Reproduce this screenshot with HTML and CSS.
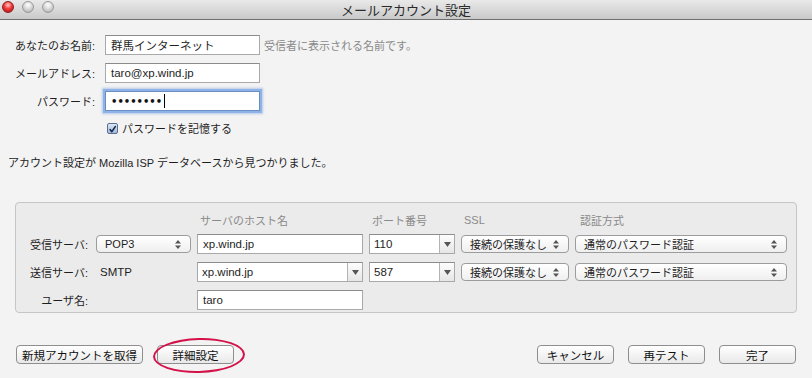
FILE: index.html
```html
<!DOCTYPE html>
<html lang="ja">
<head>
  <meta charset="UTF-8">
  <title>メールアカウント設定</title>
  <link rel="stylesheet" href="styles.css">
</head>
<body>

  <div class="window">
    <div class="titlebar">
      <div class="lights">
        <span class="light red"></span>
        <span class="light"></span>
        <span class="light"></span>
      </div>
      <div class="title">メールアカウント設定</div>
    </div>

    <div class="form">
      <label class="label">あなたのお名前:</label>
      <div class="field">群馬インターネット</div>
      <div class="hint">受信者に表示される名前です。</div>

      <label class="label">メールアドレス:</label>
      <div class="field">taro@xp.wind.jp</div>
      <div></div>

      <label class="label">パスワード:</label>
      <div class="field focus"><span class="dots">••••••••</span><span class="caret"></span></div>
      <div></div>

      <div></div>
      <div class="remember">
        <span class="check">
          <svg width="11" height="11" viewBox="0 0 11 11"><path d="M2.5 5.5 L4.6 8.2 L9 1.8" fill="none" stroke="#1c2a44" stroke-width="1.8" stroke-linecap="round" stroke-linejoin="round"/></svg>
        </span>
        パスワードを記憶する
      </div>
      <div></div>
    </div>

    <p class="message">アカウント設定が Mozilla ISP データベースから見つかりました。</p>

    <div class="panel">
      <div class="servers">
        <div></div><div></div>
        <div class="head">サーバのホスト名</div>
        <div class="head">ポート番号</div>
        <div class="head">SSL</div>
        <div class="head auth-head">認証方式</div>

        <div class="label">受信サーバ:</div>
        <div class="popup">POP3<svg class="updown" width="6" height="9" viewBox="0 0 6 9"><path d="M3 0 L6 3.4 H0 Z M3 9 L6 5.6 H0 Z" fill="#555"/></svg></div>
        <div class="field">xp.wind.jp</div>
        <div class="combo"><span class="combo-text">110</span><span class="combo-btn"><svg width="7" height="5" viewBox="0 0 7 5"><path d="M0 0 H7 L3.5 5 Z" fill="#555"/></svg></span></div>
        <div class="popup">接続の保護なし<svg class="updown" width="6" height="9" viewBox="0 0 6 9"><path d="M3 0 L6 3.4 H0 Z M3 9 L6 5.6 H0 Z" fill="#555"/></svg></div>
        <div class="popup">通常のパスワード認証<svg class="updown" width="6" height="9" viewBox="0 0 6 9"><path d="M3 0 L6 3.4 H0 Z M3 9 L6 5.6 H0 Z" fill="#555"/></svg></div>

        <div class="label">送信サーバ:</div>
        <div class="plain">SMTP</div>
        <div class="combo"><span class="combo-text">xp.wind.jp</span><span class="combo-btn"><svg width="7" height="5" viewBox="0 0 7 5"><path d="M0 0 H7 L3.5 5 Z" fill="#555"/></svg></span></div>
        <div class="combo"><span class="combo-text">587</span><span class="combo-btn"><svg width="7" height="5" viewBox="0 0 7 5"><path d="M0 0 H7 L3.5 5 Z" fill="#555"/></svg></span></div>
        <div class="popup">接続の保護なし<svg class="updown" width="6" height="9" viewBox="0 0 6 9"><path d="M3 0 L6 3.4 H0 Z M3 9 L6 5.6 H0 Z" fill="#555"/></svg></div>
        <div class="popup">通常のパスワード認証<svg class="updown" width="6" height="9" viewBox="0 0 6 9"><path d="M3 0 L6 3.4 H0 Z M3 9 L6 5.6 H0 Z" fill="#555"/></svg></div>

        <div class="label">ユーザ名:</div>
        <div></div>
        <div class="field">taro</div>
        <div></div><div></div><div></div>
      </div>
    </div>

    <div class="actions">
      <div class="left">
        <button class="btn wide">新規アカウントを取得</button>
        <span class="highlight"><button class="btn">詳細設定</button></span>
      </div>
      <div class="right">
        <button class="btn">キャンセル</button>
        <button class="btn">再テスト</button>
        <button class="btn">完了</button>
      </div>
    </div>
  </div>

</body>
</html>
```

FILE: styles.css
```css
/* reset */
* { margin:0; padding:0; box-sizing:border-box }
body {
  background:#f3f3f3;
  font-family:"Liberation Sans", "Noto Sans CJK JP", sans-serif;
  font-size:11px;
  color:#1e1e1e;
}

.window {
  width:812px; height:378px;
  display:flex; flex-direction:column;
  overflow:hidden;
}

/* title bar */
.titlebar {
  position:relative;
  height:20px;
  background:linear-gradient(#e9e9e9, #c9c9c9);
  border-bottom:1px solid #6e6e6e;
  display:flex; align-items:center; justify-content:center;
  flex-shrink:0;
}
.lights {
  position:absolute; left:2px; top:1px;
  display:flex; gap:8px;
}
.light {
  width:12px; height:12px; border-radius:50%;
  background:radial-gradient(circle at 50% 30%, #ffffff, #dadada 45%, #a9a9a9);
  border:1px solid #9a9a9a;
}
.light.red {
  background:radial-gradient(circle at 50% 30%, #ffc9c9, #f23a3a 45%, #a8100f);
  border-color:#8f1f1f;
}
.title {
  font-family:"Noto Sans CJK JP", sans-serif;
  font-size:13px; color:#2a2a2a;
  line-height:18px;
}

/* name / mail / password */
.form {
  display:grid;
  grid-template-columns:96px 155px auto;
  column-gap:9px; row-gap:8px;
  margin-top:15px;
  align-items:center;
}
.form > .label { text-align:right; padding-right:1px }
.field {
  height:20px;
  background:#fff;
  border:1px solid #a9a9a9;
  border-top-color:#8c8c8c;
  padding:0 5px;
  display:flex; align-items:center;
  white-space:nowrap;
  font-size:11.5px;
}
.field.focus {
  border-color:#6b8ec2;
  box-shadow:0 0 0 2px #8db3e8, 0 0 2px 3px rgba(120,160,220,.5);
}
.dots { font-family:"DejaVu Sans", sans-serif; font-size:10px; font-weight:bold; color:#111 }
.caret { width:1px; height:14px; background:#000; margin-left:2px }
.hint { color:#8a8a8a; margin-left:-5px }

.remember {
  display:flex; align-items:center; gap:4px;
  margin-top:1px; padding-left:2px;
}
.check {
  width:11px; height:11px;
  border:1px solid #5d6f8e; border-radius:2px;
  background:linear-gradient(#dce8f8, #9fb9de);
  display:flex;
}

.message {
  margin:20px 0 0 8px;
  line-height:14px;
}

/* server panel */
.panel {
  margin:32px 15px 0 15px;
  height:111px;
  background:#ebebeb;
  border:1px solid #c6c6c6;
  border-radius:4px;
  padding:9px 9px 0 14px;
}
.servers {
  display:grid;
  grid-template-columns:60px 95px 166px 86px 108px 212px;
  grid-template-rows:14px 20px 20px 20px;
  column-gap:6px; row-gap:8px;
  align-items:center;
}
.servers > :nth-child(-n+6) { margin-bottom:-2px }
.servers .label { text-align:right; padding-right:2px; white-space:nowrap }
.head { color:#8a8a8a; padding-left:3px; white-space:nowrap }
.auth-head { padding-left:5px }
.plain { padding-left:4px; font-size:11.5px }

.popup {
  height:18px;
  background:linear-gradient(#ffffff, #efefef);
  border:1px solid #9c9c9c;
  border-radius:4px;
  padding:0 9px 0 8px;
  display:flex; align-items:center; justify-content:space-between;
  white-space:nowrap;
  font-size:11px;
}
.combo {
  height:20px;
  background:#fff;
  border:1px solid #a9a9a9;
  border-top-color:#8c8c8c;
  display:flex; align-items:stretch;
  font-size:11.5px;
}
.combo-text { flex:1; padding-left:4px; display:flex; align-items:center }
.combo-btn {
  width:15px;
  border-left:1px solid #b4b4b4;
  background:linear-gradient(#fdfdfd, #e6e6e6);
  display:flex; align-items:center; justify-content:center;
}

/* bottom buttons */
.actions {
  margin-top:32px;
  padding:0 16px;
  display:flex; justify-content:space-between;
}
.left, .right { display:flex; gap:14px }
.btn {
  width:77px; height:19px;
  font:inherit; font-size:11.5px; color:#111;
  background:linear-gradient(#ffffff, #e9e9e9);
  border:1px solid #8e8e8e;
  border-radius:4px;
}
.btn.wide { width:127px }
.highlight { position:relative; display:flex }
.highlight::after {
  content:"";
  position:absolute;
  left:-4px; right:-11px; top:-7px; bottom:-9px;
  border:2.5px solid #d3124a;
  border-radius:50%;
  transform:rotate(-1.5deg);
}
```
